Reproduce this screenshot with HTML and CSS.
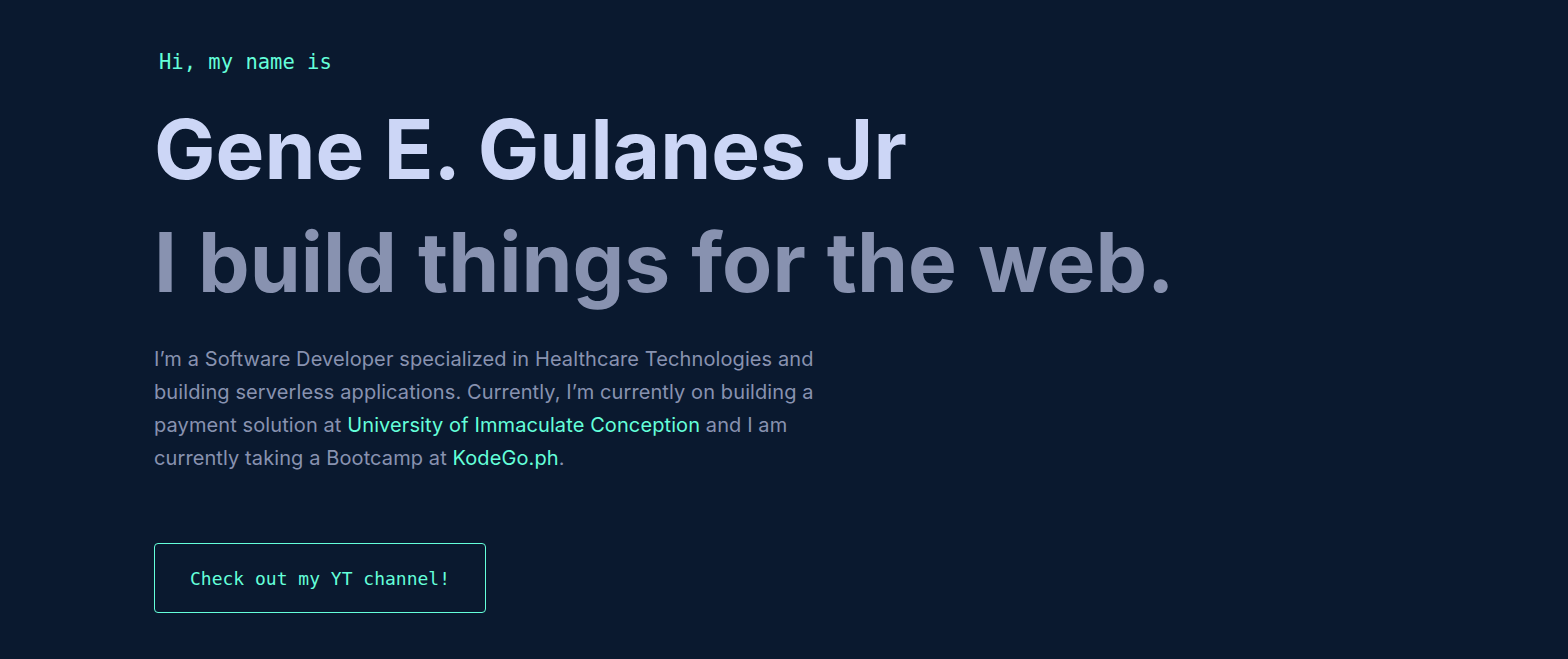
FILE: index.html
```html
<!DOCTYPE html>
<html lang="en">
<head>
<meta charset="utf-8">
<title>Gene E. Gulanes Jr</title>
<link rel="stylesheet" href="styles.css">
</head>
<body>
<main class="hero">
  <h1 class="intro">Hi, my name is</h1>
  <h2 class="big-heading name">Gene E. Gulanes Jr</h2>
  <h3 class="big-heading tagline">I build things for the web.</h3>
  <p class="about">I’m a Software Developer specialized in Healthcare Technologies and building serverless applications. Currently, I’m currently on building a payment solution at <a href="#" class="link">University of Immaculate Conception</a> and I am currently taking a Bootcamp at <a href="#" class="link">KodeGo.ph</a>.</p>
  <a href="#" class="cta">Check out my YT channel!</a>
</main>
</body>
</html>
```
FILE: styles.css
```css
html, body {
  margin: 0;
  padding: 0;
  background: #0a192f;
  height: 100%;
}
body {
  font-family: Inter, "Liberation Sans", sans-serif;
  color: #8892b0;
}
.hero {
  padding: 0 154px;
  display: flex;
  flex-direction: column;
  align-items: flex-start;
}
.intro {
  margin: 49px 0 0 5px;
  font-family: "DejaVu Sans Mono", monospace;
  font-weight: 400;
  font-size: 20.5px;
  line-height: 26px;
  color: #64ffda;
}
.big-heading {
  margin: 0;
  font-weight: 700;
  font-size: 82px;
  letter-spacing: 0;
}
.name {
  margin-top: 25px;
  line-height: 100px;
  color: #ccd6f6;
}
.tagline {
  margin-top: 13px;
  line-height: 100px;
  word-spacing: 1.6px;
  color: #8892b0;
}
.about {
  margin: 30px 0 0;
  max-width: 675px;
  font-size: 20px;
  line-height: 33px;
  letter-spacing: 0.1px;
}
.link {
  color: #64ffda;
  text-decoration: none;
}
.cta {
  margin-top: 68px;
  box-sizing: border-box;
  width: 332px;
  height: 70px;
  display: flex;
  align-items: center;
  justify-content: center;
  border: 1px solid #64ffda;
  border-radius: 4px;
  font-family: "DejaVu Sans Mono", monospace;
  font-size: 18px;
  color: #64ffda;
  text-decoration: none;
}
```
